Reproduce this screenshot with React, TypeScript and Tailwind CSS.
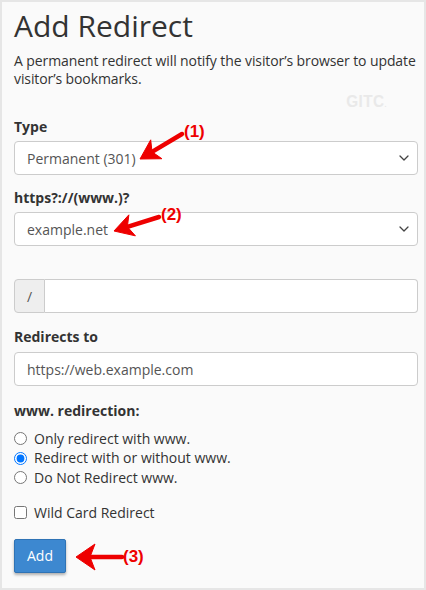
import React from 'react';

type Pt = [number, number];

// build a barbed arrow head polygon + shaft line from tail to tip
function arrowPoints(tail: Pt, tip: Pt, headLen: number, headHalf: number, notch: number) {
  const dx = tip[0] - tail[0];
  const dy = tip[1] - tail[1];
  const len = Math.hypot(dx, dy);
  const ux = dx / len;
  const uy = dy / len;
  const nx = -uy;
  const ny = ux;
  const bx = tip[0] - ux * headLen;
  const by = tip[1] - uy * headLen;
  const left: Pt = [bx + nx * headHalf, by + ny * headHalf];
  const right: Pt = [bx - nx * headHalf, by - ny * headHalf];
  const mid: Pt = [tip[0] - ux * (headLen - notch), tip[1] - uy * (headLen - notch)];
  return {
    head: [tip, left, mid, right].map(p => p.join(',')).join(' '),
    shaftEnd: mid,
  };
}

function Arrow({ tail, tip, headLen = 18, headHalf = 12, notch = 5, width = 4.5 }: {
  tail: Pt; tip: Pt; headLen?: number; headHalf?: number; notch?: number; width?: number;
}) {
  const a = arrowPoints(tail, tip, headLen, headHalf, notch);
  return (
    <g fill="#ee0000" stroke="#ee0000">
      <line x1={tail[0]} y1={tail[1]} x2={a.shaftEnd[0]} y2={a.shaftEnd[1]} strokeWidth={width} strokeLinecap="round" />
      <polygon points={a.head} strokeWidth={1} strokeLinejoin="round" />
    </g>
  );
}

function Chevron() {
  return (
    <svg className="w-[10px] h-[6px]" viewBox="0 0 10 6" fill="none">
      <path d="M1 1l4 4 4-4" stroke="#444" strokeWidth="1.3" strokeLinecap="round" strokeLinejoin="round" />
    </svg>
  );
}

function SelectBox({ value }: { value: string }) {
  return (
    <div className="flex items-center justify-between h-[34px] bg-white border border-[#cccccc] rounded-[4px] pl-[12px] pr-[8px] text-[14px] text-[#555555]">
      <span>{value}</span>
      <Chevron />
    </div>
  );
}

export default function App() {
  return (
    <div
      className="relative w-[426px] h-[590px] border-2 border-[#e6e6e6] bg-[#fafafa] text-[#333333] overflow-hidden"
      style={{ fontFamily: '"Open Sans", "Noto Sans", sans-serif' }}
    >
      <div className="pl-[12px] pr-[6px] pt-[7px]">
        <h1 className="text-[30px] leading-[33px] font-normal text-[#333333]">Add Redirect</h1>
        <p className="mt-[10px] text-[14px] leading-[18px] tracking-[-0.1px]">
          A permanent redirect will notify the visitor’s browser to update visitor’s bookmarks.
        </p>

        <div className="h-[29px] relative">
          <span className="absolute right-[29px] top-[1px] text-[17px] font-bold tracking-[0.5px] text-[#e9e9e9] scale-x-90" style={{ fontFamily: '"Liberation Sans", sans-serif' }}>
            GITC<span className="text-[8px]">.</span>
          </span>
        </div>

        <label className="block text-[14px] font-bold leading-[20px]">Type</label>
        <div className="mt-[4px]">
          <SelectBox value="Permanent (301)" />
        </div>

        <label className="block mt-[13px] text-[14px] font-bold leading-[20px]">https?://(www.)?</label>
        <div className="mt-[4px]">
          <SelectBox value="example.net" />
        </div>

        <div className="mt-[33px] flex h-[34px]">
          <span className="flex items-center justify-center w-[31px] bg-[#eeeeee] border border-[#cccccc] rounded-l-[4px] text-[14px] text-[#555555]">/</span>
          <input className="flex-1 bg-white border border-l-0 border-[#cccccc] rounded-r-[4px] px-[12px] text-[14px] outline-none" />
        </div>

        <label className="block mt-[14px] text-[14px] font-bold leading-[20px]">Redirects to</label>
        <div className="mt-[5px] flex items-center h-[34px] bg-white border border-[#cccccc] rounded-[4px] px-[12px] text-[14px] text-[#555555]">
          https://web.example.com
        </div>

        <label className="block mt-[15px] text-[14px] font-bold leading-[20px]">www. redirection:</label>
        <div className="mt-[8px] flex flex-col text-[14px] leading-[20px]">
          {['Only redirect with www.', 'Redirect with or without www.', 'Do Not Redirect www.'].map((t, i) => (
            <label key={t} className="flex items-center gap-[7px] h-[19.5px]">
              <input type="radio" name="www" defaultChecked={i === 1} className="m-0 w-[13px] h-[13px]" />
              <span>{t}</span>
            </label>
          ))}
        </div>

        <label className="mt-[15px] flex items-center gap-[7px] text-[14px] leading-[20px]">
          <input type="checkbox" className="m-0 w-[13px] h-[13px]" />
          <span>Wild Card Redirect</span>
        </label>

        <button className="mt-[16px] w-[52px] h-[34px] bg-[#3d88d0] border border-[#2f73b5] rounded-[2px] text-white text-[14px] shadow-[0_2px_3px_rgba(0,0,0,0.3)]">
          Add
        </button>
      </div>

      <svg className="absolute inset-0 pointer-events-none" width="426" height="590" viewBox="0 0 426 590">
        <Arrow tail={[180, 132]} tip={[138, 157]} headLen={19} headHalf={11} />
        <Arrow tail={[157, 215]} tip={[112, 229]} headLen={19} headHalf={11} />
        <Arrow tail={[120, 555]} tip={[74, 555]} headLen={19} headHalf={13} />
      </svg>
      <span className="absolute left-[182px] top-[121px] text-[17px] font-bold text-[#ee0000] leading-none" style={{ fontFamily: '"Liberation Sans", Arial, sans-serif' }}>(1)</span>
      <span className="absolute left-[159px] top-[204px] text-[17px] font-bold text-[#ee0000] leading-none" style={{ fontFamily: '"Liberation Sans", Arial, sans-serif' }}>(2)</span>
      <span className="absolute left-[121px] top-[546px] text-[17px] font-bold text-[#ee0000] leading-none" style={{ fontFamily: '"Liberation Sans", Arial, sans-serif' }}>(3)</span>
    </div>
  );
}
